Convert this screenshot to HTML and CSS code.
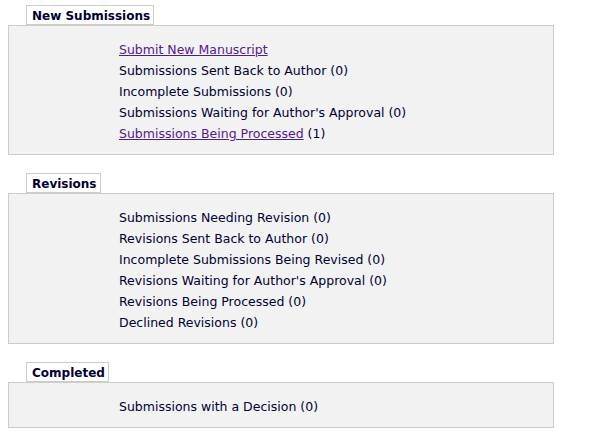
FILE: index.html
```html
<!DOCTYPE html>
<html>
<head>
<meta charset="utf-8">
<link rel="stylesheet" href="styles.css">
</head>
<body>
<div class="page">
  <div class="section">
    <div class="legend">New Submissions</div>
    <div class="box">
      <div class="line"><a href="#" class="link">Submit New Manuscript</a></div>
      <div class="line">Submissions Sent Back to Author (0)</div>
      <div class="line">Incomplete Submissions (0)</div>
      <div class="line">Submissions Waiting for Author's Approval (0)</div>
      <div class="line"><a href="#" class="link">Submissions Being Processed</a> (1)</div>
    </div>
  </div>
  <div class="section">
    <div class="legend">Revisions</div>
    <div class="box">
      <div class="line">Submissions Needing Revision (0)</div>
      <div class="line">Revisions Sent Back to Author (0)</div>
      <div class="line">Incomplete Submissions Being Revised (0)</div>
      <div class="line">Revisions Waiting for Author's Approval (0)</div>
      <div class="line">Revisions Being Processed (0)</div>
      <div class="line">Declined Revisions (0)</div>
    </div>
  </div>
  <div class="section">
    <div class="legend">Completed</div>
    <div class="box">
      <div class="line">Submissions with a Decision (0)</div>
    </div>
  </div>
</div>
</body>
</html>
```
FILE: styles.css
```css
html, body {
  margin: 0;
  padding: 0;
  background: #ffffff;
}
body {
  font-family: "DejaVu Sans", Verdana, sans-serif;
  font-size: 12.5px;
  color: #000033;
}
.page {
  padding: 5px 0 0 8px;
  width: 546px;
}
.section {
  display: flex;
  flex-direction: column;
  align-items: flex-start;
  margin-bottom: 18px;
}
.legend {
  margin-left: 18px;
  height: 17px;
  line-height: 18px;
  padding: 1px 3px 0 5px;
  border: 1px solid #cccccc;
  background: #ffffff;
  font-size: 12px;
  font-weight: bold;
}
.box {
  align-self: stretch;
  background: #f2f2f2;
  border: 1px solid #cccccc;
  padding: 13px 0 10px 110px;
}
.line {
  height: 21px;
  line-height: 21px;
  white-space: nowrap;
}
.link {
  color: #551a8b;
  text-decoration: underline;
}
```
